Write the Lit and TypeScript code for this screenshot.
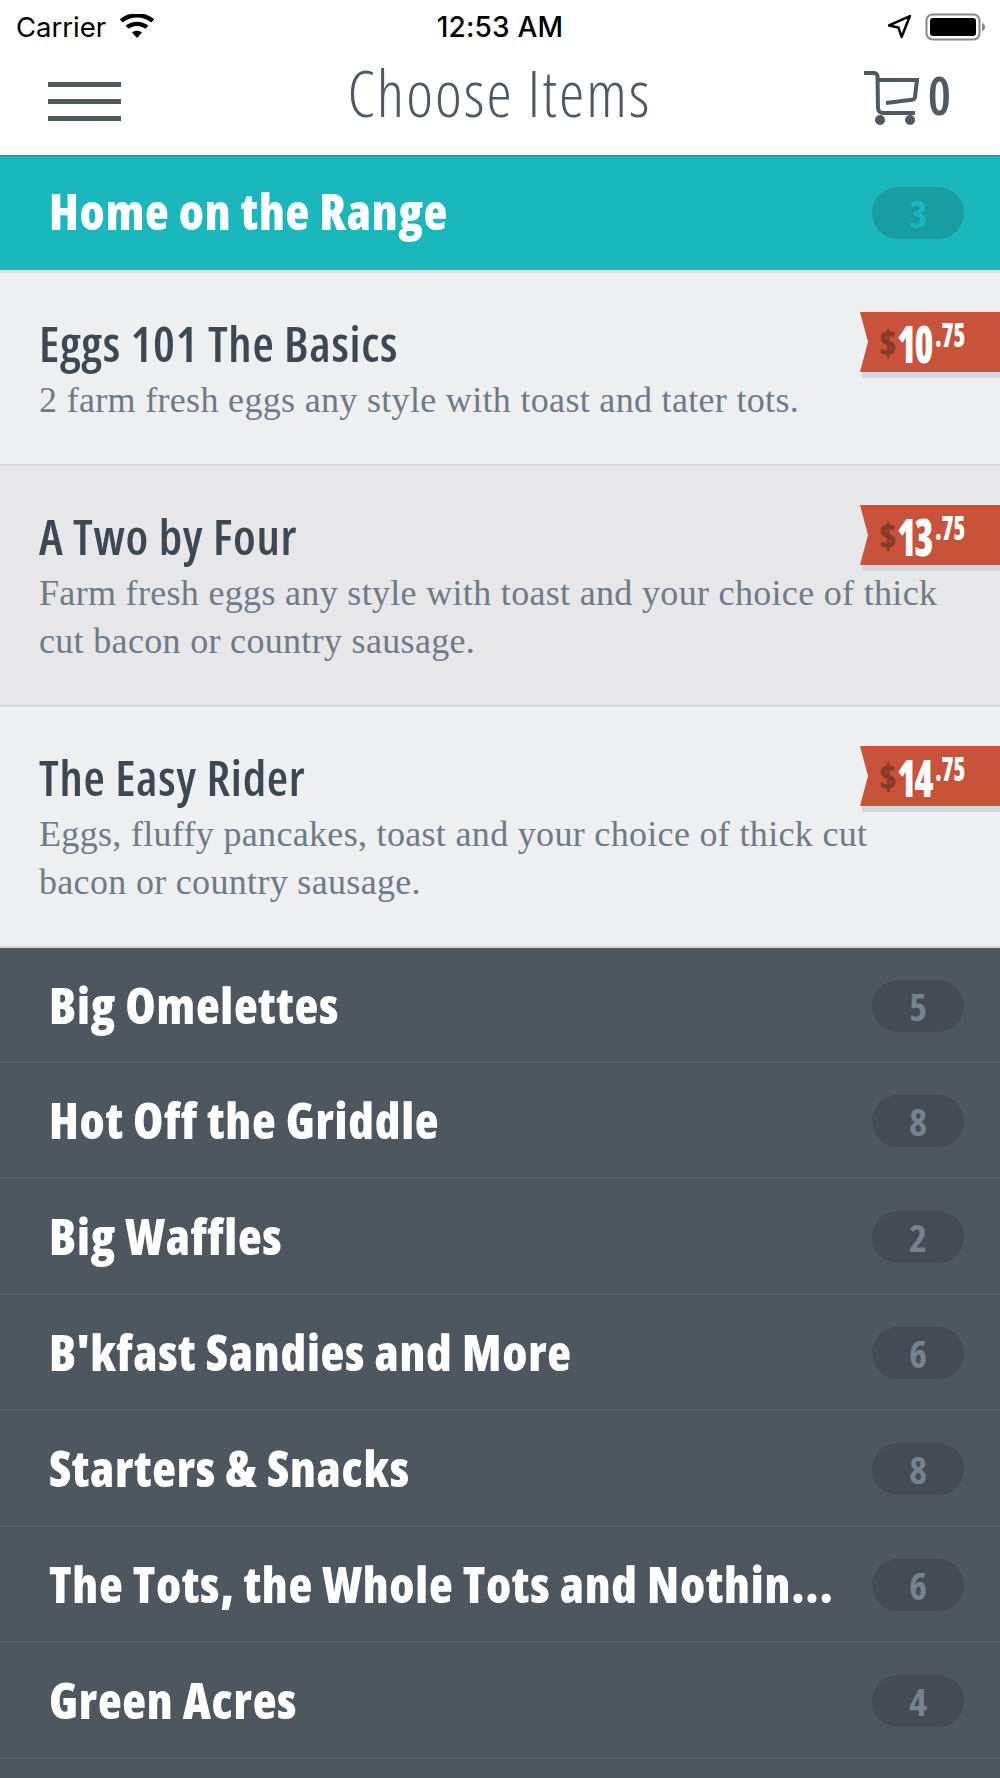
import { LitElement, html, css } from "lit";
import { customElement } from "lit/decorators.js";

const items = [
  { name: "Eggs 101 The Basics", desc: "2 farm fresh eggs any style with toast and tater tots.", d: "10", c: ".75" },
  { name: "A Two by Four", desc: "Farm fresh eggs any style with toast and your choice of thick cut bacon or country sausage.", d: "13", c: ".75" },
  { name: "The Easy Rider", desc: "Eggs, fluffy pancakes, toast and your choice of thick cut bacon or country sausage.", d: "14", c: ".75" },
];
const cats = [
  ["Big Omelettes", "5"], ["Hot Off the Griddle", "8"], ["Big Waffles", "2"], ["B'kfast Sandies and More", "6"],
  ["Starters & Snacks", "8"], ["The Tots, the Whole Tots and Nothin...", "6"], ["Green Acres", "4"],
];

@customElement("app-root")
export class AppRoot extends LitElement {
  static styles = css`
    :host { display: block; width: 1000px; height: 1778px; overflow: hidden; background: #4e5660; font-family: "Open Sans", sans-serif; }
    .status { height: 41px; background: #fff; display: flex; align-items: center; justify-content: space-between; padding: 6px 15px 0 16px; position: relative; color: #000; font: 400 27.5px Inter, sans-serif; }
    .status .l, .status .r { display: flex; align-items: center; gap: 13px; }
    .time { position: absolute; left: 0; right: 0; text-align: center; font-weight: 500; font-size: 28px; letter-spacing: .2px; }
    .nav { height: 108px; background: #fff; display: flex; align-items: center; padding: 0 49px 0 48px; color: #4f5963; }
    .nav > * { flex: 1; }
    .title { flex: none; font-size: 64px; font-weight: 300; font-stretch: 75%; letter-spacing: 2px; line-height: 1; margin-top: -16px; }
    .burger { display: flex; flex-direction: column; gap: 12px; }
    .burger i { height: 5px; width: 73px; background: #4f5963; display: block; }
    .cart { display: flex; align-items: center; justify-content: flex-end; gap: 9px; }
    .cart svg { margin-bottom: 6px; }
    .cart span { font-size: 52px; font-weight: 600; font-stretch: 75%; line-height: 1; margin-top: -12px; }
    .cat { height: 112px; border-bottom: 2px solid #565e68; display: flex; align-items: center; justify-content: space-between; padding: 2px 36px 0 49px; color: #fff; font-size: 49px; font-weight: 800; font-stretch: 75%; letter-spacing: .75px; background: #4e5660; }
    .cat > span:first-child { margin-top: -2px; }
    .cat.first { height: 111px; }
    .cat.on { background: #1ab8bc; border-top: 1px solid #14989c; height: 114px; padding-top: 0; border-bottom: 3px solid #dcdee0; }
    .cat.on > span:first-child { margin-top: -4px; }
    .badge { height: 52px; border-radius: 26px; padding: 0 37px; background: #444b55; color: #75828f; font-size: 38px; font-weight: 700; font-stretch: 75%; letter-spacing: 0; display: flex; align-items: center; }
    .on .badge { background: #189ea2; color: #1ab8bc; }
    .item { position: relative; background: #eeeff1; padding: 37px 39px 40px; border-bottom: 2px solid #d8dadc; color: #3e4852; }
    .item.alt { background: #e7e7e9; }
    .name { font-size: 49px; font-weight: 600; font-stretch: 75%; letter-spacing: .7px; line-height: 66px; }
    .desc { font: 400 36px/48px "Liberation Serif", serif; letter-spacing: .32px; color: #6e7a87; }
    .price { position: absolute; right: 0; top: 39px; width: 140px; }
    .ribbon { height: 60px; background: #c9533a; clip-path: polygon(0 0, 100% 0, 100% 100%, 0 100%, 8px 50%); display: flex; align-items: center; padding-left: 19px; color: #fff; font-weight: 800; font-stretch: 75%; font-size: 52px; letter-spacing: -2px; }
    .ribbon b { font-size: 36px; color: #8a3a28; margin-right: 0; letter-spacing: 0; }
    .amt { display: flex; transform: scaleX(.74); transform-origin: left center; height: 100%; align-items: center; }
    .ribbon sup { font-size: 33px; line-height: 1; align-self: flex-start; margin: 6px 0 0 4px; letter-spacing: -.5px; }
    .shadow { height: 6px; margin-left: 2px; background: #d5d8db; }
  `;

  render() {
    return html`
      <div class="status">
        <div class="l"><span>Carrier</span>
          <svg width="36" height="26" viewBox="0 0 36 26"><path fill="#000" d="M18 24l-5-5.500c3-2.400 7-2.400 10 0zM9.500 14.800L6.600 11.600c6.600-5.300 16.200-5.300 22.800 0l-2.900 3.200c-5-3.900-12-3.900-17 0zM3.700 8.400L.8 5.200c9.900-8 24.500-8 34.400 0l-2.900 3.200C24 1.800 12 1.800 3.700 8.400z"/></svg>
        </div>
        <span class="time">12:53 AM</span>
        <div class="r">
          <svg width="25" height="25" viewBox="0 0 24 24"><path fill="none" stroke="#000" stroke-width="2.400" stroke-linejoin="round" d="M2 11L22 2l-8 20-3-9z"/></svg>
          <svg width="60" height="28" viewBox="0 0 60 28"><rect x="1.500" y="1.500" width="53" height="25" rx="6" fill="none" stroke="#888" stroke-width="2"/><rect x="5" y="5" width="46" height="18" rx="3" fill="#000"/><path d="M57 10c2 .5 3 2 3 4s-1 3.500-3 4z" fill="#888"/></svg>
        </div>
      </div>
      <div class="nav">
        <div class="burger"><i></i><i></i><i></i></div>
        <div class="title">Choose Items</div>
        <div class="cart">
          <svg width="56" height="56" viewBox="0 0 56 56"><g fill="none" stroke="#4f5963" stroke-width="4"><path d="M1 3h10c2 0 3 1 3.500 3l.5 32c0 3 2 5 5 5h32"/><path d="M14 10h40l-2 17c-.3 2-1.500 2.500-3 2.700L23 33"/></g><circle cx="17" cy="50" r="5" fill="#4f5963"/><circle cx="47" cy="50" r="5" fill="#4f5963"/></svg>
          <span>0</span>
        </div>
      </div>
      <div class="cat on"><span>Home on the Range</span><span class="badge">3</span></div>
      ${items.map((it, i) => html`
        <div class="item ${i === 1 ? "alt" : ""}">
          <div class="name">${it.name}</div>
          <div class="desc">${it.desc}</div>
          <div class="price"><div class="ribbon"><b>$</b><span class="amt">${it.d}<sup>${it.c}</sup></span></div><div class="shadow"></div></div>
        </div>`)}
      ${cats.map(([n, c], i) => html`<div class="cat ${i === 0 ? "first" : ""}"><span>${n}</span><span class="badge">${c}</span></div>`)}
    `;
  }
}
